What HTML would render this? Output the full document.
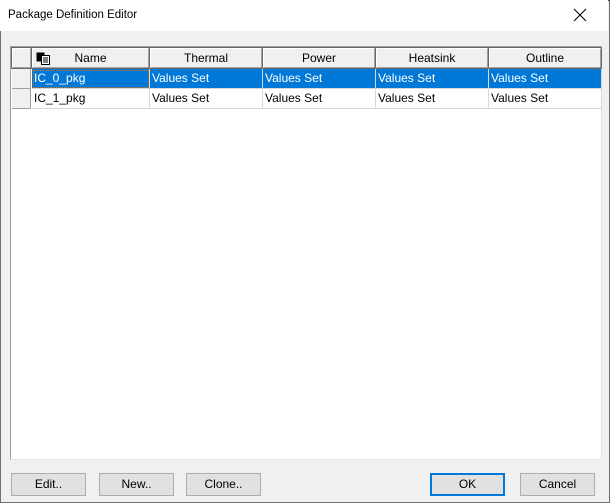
<!DOCTYPE html>
<html><head><style>
*{margin:0;padding:0;box-sizing:border-box}
body{width:610px;height:503px;background:#f0f0f0;font-family:"Liberation Sans",sans-serif;font-size:12px;color:#000;position:relative;overflow:hidden}
.win{position:absolute;left:0;top:0;width:610px;height:503px;border:1px solid #707070;border-top-color:#404040}
.title{position:absolute;left:0;top:0;width:608px;height:31px;background:#fff}
.title span{position:absolute;left:8px;top:9px;font-size:11.5px}
.x{position:absolute;left:573px;top:8px;width:14px;height:14px}
.grid{position:absolute;left:10px;top:46px;width:592px;height:414px;background:#fff;border:1px solid #a0a0a0;border-right-color:#e3e3e3;border-bottom-color:#e3e3e3}
.c{position:absolute;height:20px;line-height:19px;white-space:nowrap;overflow:hidden}
.h{background:#f0f0f0;border:1px solid #fff;border-right-color:#a0a0a0;border-bottom-color:#a0a0a0;outline:1px solid #696969;text-align:center}
.r{position:absolute;left:1px;width:19px;height:20px;background:#f0f0f0;border-right:1px solid #a0a0a0;border-bottom:1px solid #a0a0a0}
.d{border-right:1px solid #d8d8d8;border-bottom:1px solid #d8d8d8;padding-left:2px}
.sel{background:#0078d7;color:#fff}
.btn{position:absolute;top:473px;height:23px;width:75px;background:#e1e1e1;border:1px solid #adadad;text-align:center;line-height:21px}
.ok{border:2px solid #0078d7;line-height:19px}
</style></head><body>
<div class="win"></div>
<div class="title"><span>Package Definition Editor</span>
<svg class="x" viewBox="0 0 14 14"><path d="M1 1L13 13M13 1L1 13" stroke="#000" stroke-width="1.1"/></svg></div>
<div class="grid">
<div class="c h" style="left:1px;top:1px;width:19px"></div>
<div class="c h" style="left:21px;top:1px;width:117px">Name</div>
<svg style="position:absolute;left:25px;top:5px" width="14" height="13" viewBox="0 0 14 13"><rect x="0.5" y="0.5" width="8" height="9" fill="#000"/><rect x="5.5" y="3.5" width="8" height="9" fill="#fff" stroke="#000"/><path d="M7 6h5M7 8h5M7 10h5" stroke="#000"/></svg>
<div class="c h" style="left:139px;top:1px;width:112px">Thermal</div>
<div class="c h" style="left:252px;top:1px;width:112px">Power</div>
<div class="c h" style="left:365px;top:1px;width:112px">Heatsink</div>
<div class="c h" style="left:478px;top:1px;width:112px">Outline</div>

<div class="r" style="top:22px"></div>
<div class="c d sel" style="left:21px;top:22px;width:118px;outline:1px dotted #e07000;outline-offset:-2px">IC_0_pkg</div>
<div class="c d sel" style="left:139px;top:22px;width:113px">Values Set</div>
<div class="c d sel" style="left:252px;top:22px;width:113px">Values Set</div>
<div class="c d sel" style="left:365px;top:22px;width:113px">Values Set</div>
<div class="c d sel" style="left:478px;top:22px;width:113px">Values Set</div>

<div class="r" style="top:42px"></div>
<div class="c d" style="left:21px;top:42px;width:118px">IC_1_pkg</div>
<div class="c d" style="left:139px;top:42px;width:113px">Values Set</div>
<div class="c d" style="left:252px;top:42px;width:113px">Values Set</div>
<div class="c d" style="left:365px;top:42px;width:113px">Values Set</div>
<div class="c d" style="left:478px;top:42px;width:113px">Values Set</div>
</div>
<div class="btn" style="left:11px">Edit..</div>
<div class="btn" style="left:99px">New..</div>
<div class="btn" style="left:186px">Clone..</div>
<div class="btn ok" style="left:430px">OK</div>
<div class="btn" style="left:520px">Cancel</div>
</body></html>
